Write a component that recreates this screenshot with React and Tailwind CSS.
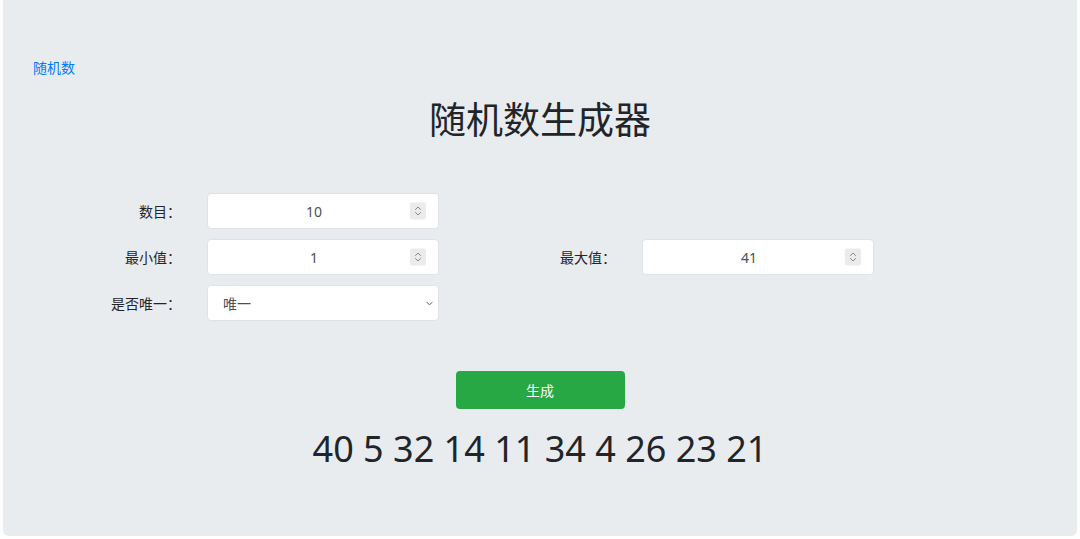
import { ChevronDown } from "lucide-react";

const font = { fontFamily: '"Noto Sans", "Noto Sans CJK SC", sans-serif' };

function Spinner() {
    return (
        <span className="absolute right-[12px] top-1/2 -translate-y-1/2 flex h-[17px] w-[16px] items-center justify-center rounded-[2px] bg-[#ebebeb]">
            <svg width="8" height="11" viewBox="0 0 8 11" fill="none" stroke="#888" strokeWidth="1" strokeLinecap="round" strokeLinejoin="round">
                <polyline points="1.5 4 4 1.5 6.5 4" />
                <polyline points="1.5 7 4 9.5 6.5 7" />
            </svg>
        </span>
    );
}

function NumberBox({ value }) {
    return (
        <div className="relative flex h-[36px] w-[232px] items-center justify-center rounded-[4px] border border-[#dfe3e7] bg-white pr-[18px] text-[14px] text-[#495057]">
            {value}
            <Spinner />
        </div>
    );
}

function Label({ text }) {
    return (
        <div className="w-[145px] pr-[26px] text-right text-[14px] text-[#212529]">{text}</div>
    );
}

export default function App() {
    return (
        <div className="h-[539px] w-[1080px] bg-white" style={font}>
            <div className="mx-[3px] h-[536px] rounded-b-[6px] bg-[#e9ecef] pt-[58px]">
                <div className="pl-[30px] text-[14px] leading-[20px] text-[#007bff]">随机数</div>

                <h1 className="mt-[12px] text-center text-[37px] leading-[60px] text-[#212529]">随机数生成器</h1>

                <div className="mt-[43px] flex flex-col gap-[10px] pl-[59px]">
                    <div className="flex items-center">
                        <Label text="数目：" />
                        <NumberBox value="10" />
                    </div>
                    <div className="flex items-center">
                        <Label text="最小值：" />
                        <NumberBox value="1" />
                        <div className="w-[58px]" />
                        <Label text="最大值：" />
                        <NumberBox value="41" />
                    </div>
                    <div className="flex items-center">
                        <Label text="是否唯一：" />
                        <div className="flex h-[36px] w-[232px] items-center justify-between rounded-[4px] border border-[#dfe3e7] bg-white pl-[15px] pr-[3px] text-[14px] text-[#495057]">
                            <span>唯一</span>
                            <ChevronDown className="h-[11px] w-[11px] text-[#555]" strokeWidth={2} />
                        </div>
                    </div>
                </div>

                <div className="mt-[50px] flex justify-center">
                    <button className="h-[38px] w-[169px] rounded-[4px] bg-[#28a745] text-[14px] text-white">生成</button>
                </div>

                <div className="mt-[14px] text-center text-[36px] leading-[52px] text-[#212529]">40 5 32 14 11 34 4 26 23 21</div>
            </div>
        </div>
    );
}
